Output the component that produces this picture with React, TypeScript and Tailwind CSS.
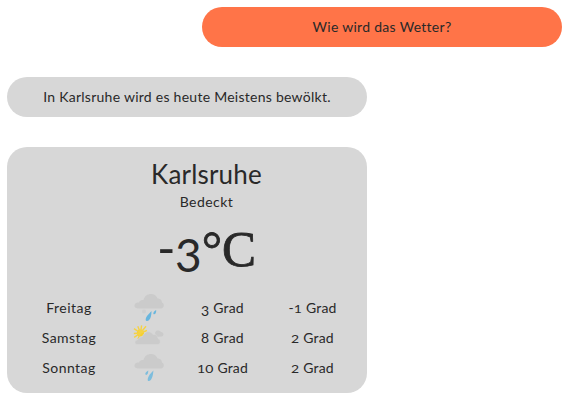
import React from "react";

const CLOUD =
  "M5 15 C1.5 15 0 13.5 .5 11.5 C1 9.5 3 9 5 9 C5.5 7 7.5 6.5 9.5 6.5 C10.5 2.5 13.5 .5 17 .5 C20.5 .5 22.5 2.5 23.5 5 C27 5 28 7.5 28 9 C30.5 10 30.5 14 27.5 15 Z";

function RainIcon({ second = false }: { second?: boolean }) {
  return (
    <svg width="32" height="30" viewBox="0 0 32 30" className="block">
      <path d={CLOUD} transform="translate(1 0.5)" fill="#cbcbcb" />
      {!second && <circle cx="11" cy="18.5" r="2" fill="#cfcfcf" />}
      {second ? (
        <g fill="#7dbddd">
          <path d="M15.3 17.5 C13.3 18.6 11.5 20.6 12.7 21.8 C14.2 22.5 15.3 20.3 15.3 17.5Z" />
          <path d="M20.4 17.5 L16.7 21.5 C14.8 24.6 14 27.5 15.4 28 C18 28.6 20 24 20.4 17.5Z" />
        </g>
      ) : (
        <g fill="#68b6de">
          <path d="M18.5 18 L14.4 22.5 C12.5 25 12 27.4 13.5 28 C16.5 28.7 18.5 24 18.5 18Z" />
          <path d="M23.2 17 C21 18 19.6 20.3 20.7 21.3 C22.4 21.8 23.3 19.5 23.2 17Z" />
        </g>
      )}
    </svg>
  );
}

function PartlyIcon() {
  return (
    <svg width="32" height="30" viewBox="0 0 32 30" className="block">
      <circle cx="7.5" cy="10" r="3.6" fill="#f7d02d" />
      <path
        d="M7.5 10 L1 5.7 M7.5 10 L4.8 3.2 M7.5 10 L8.6 2.3 M7.5 10 L13 3.2 M7.5 10 L14 7.5 M7.5 10 L.8 10.5 M7.5 10 L1.2 14.3 M7.5 10 L5 16"
        stroke="#f5d245"
        strokeWidth="1.4"
      />
      <path d="M22 9.5 C23 6.5 27 7 28 9 C31 9 31.5 13 28.5 13.5 L23 14 Z" fill="#cbcbcb" />
      <path d="M4 21.5 C1 21.5 1.5 17 5 16.5 C6 14 8 14 9 14 C11 8.5 17 6.5 20 11.5 C23.5 11 24.5 13 25 15.5 C28 16.5 28 21 25 21.5 Z" fill="#cbcbcb" stroke="#d7d7d7" strokeWidth=".5" />
    </svg>
  );
}

// Old-style figures: 0, 1 and 2 stand at x-height, 3 drops below the baseline.
function Degrees({ value }: { value: string }) {
  return (
    <span>
      {value.split("").map((c, i) =>
        "012".includes(c) ? (
          <span key={i} className="inline-block origin-[50%_80%] scale-y-[0.76] leading-none">{c}</span>
        ) : c === "3" ? (
          <span key={i} className="inline-block translate-y-[2.5px] leading-none">{c}</span>
        ) : (
          <span key={i}>{c}</span>
        ),
      )}{" "}
      Grad
    </span>
  );
}

const forecast = [
  { day: "Freitag", icon: <RainIcon />, high: "3", low: "-1" },
  { day: "Samstag", icon: <PartlyIcon />, high: "8", low: "2" },
  { day: "Sonntag", icon: <RainIcon second />, high: "10", low: "2" },
];

export default function App() {
  return (
    <main className="flex h-[401px] w-[568px] flex-col gap-[30px] overflow-hidden bg-white pt-[7px] pr-[6px] pl-[7px] font-['Lato','Noto_Sans',sans-serif] text-[14px] text-[#292929]">
      <div className="flex h-10 w-[360px] shrink-0 items-center justify-center self-end rounded-[20px] bg-[#ff7448] pb-[2px]">
        <span className="tracking-[0.29px]">Wie wird das Wetter?</span>
      </div>
      <div className="flex h-10 w-[360px] shrink-0 items-center justify-center rounded-[20px] bg-[#d7d7d7] pb-[2px]">
        <span className="tracking-[0.26px]">In Karlsruhe wird es heute Meistens bewölkt.</span>
      </div>
      <section className="flex h-[246px] w-[360px] shrink-0 flex-col rounded-[20px] bg-[#d7d7d7] pt-[10px]">
        <div className="flex flex-col items-center pl-[39px]">
          <h1 className="h-[35px] text-[26px] leading-[35px] tracking-[0.2px]">Karlsruhe</h1>
          <p className="h-5 leading-5 tracking-[0.45px]">Bedeckt</p>
          <p className="flex h-[71px] items-baseline text-[46px] leading-[71px]">
            <span className="w-[18px] text-[50px] tracking-[-1px]">-</span>
            <span className="translate-y-[6px]">3</span>
            <span className="font-['Liberation_Serif',serif] text-[51px] [-webkit-text-stroke:0.8px_#292929]">°C</span>
          </p>
        </div>
        <div className="mt-[10px] flex flex-col">
          {forecast.map((f) => (
            <div key={f.day} className="grid h-[30px] grid-cols-[124px_36px_111px_69px] items-center text-center">
              <span className="pb-[2px] tracking-[0.45px]">{f.day}</span>
              <span className="flex justify-center">{f.icon}</span>
              <span className="pb-[2px] tracking-[0.2px]"><Degrees value={f.high} /></span>
              <span className="pb-[2px] tracking-[0.2px]"><Degrees value={f.low} /></span>
            </div>
          ))}
        </div>
      </section>
    </main>
  );
}
